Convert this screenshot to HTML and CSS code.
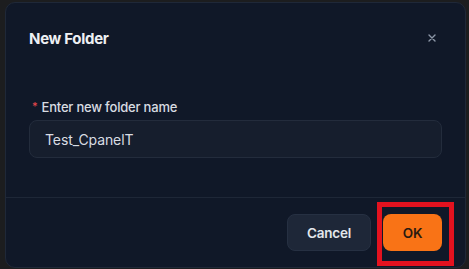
FILE: index.html
```html
<!DOCTYPE html>
<html>
<head>
<meta charset="utf-8">
<link rel="stylesheet" href="styles.css">
</head>
<body>
<div class="dialog">
  <div class="header">
    <div class="title">New Folder</div>
    <svg class="close" width="10" height="10" viewBox="0 0 10 10"><path d="M2 2L8 8M8 2L2 8" stroke="#8d97a8" stroke-width="1.4" stroke-linecap="round"/></svg>
  </div>
  <div class="body">
    <div class="label"><span class="req">*</span>Enter new folder name</div>
    <div class="input">Test_CpanelT</div>
  </div>
  <div class="footer">
    <button class="btn cancel">Cancel</button>
    <button class="btn ok">OK</button>
    <div class="highlight"></div>
  </div>
</div>
</body>
</html>
```
FILE: styles.css
```css
html, body { margin: 0; padding: 0; }
body {
  background: #1c1d1f;
  width: 469px;
  height: 269px;
  overflow: hidden;
  font-family: Inter, "Noto Sans", sans-serif;
}
.dialog {
  position: relative;
  margin: 2px 0 0 5px;
  width: 459px;
  height: 264px;
  background: #101828;
  border: 1px solid #1f2838;
  border-radius: 10px;
  box-sizing: content-box;
}
.header {
  display: flex;
  align-items: center;
  justify-content: space-between;
  padding: 26px 28px 0 23px;
  height: 20px;
}
.title {
  color: #eef0f3;
  font-size: 15px;
  font-weight: 700;
  letter-spacing: -0.3px;
  line-height: 20px;
}
.close { display: block; margin-top: -2px; }
.body {
  padding: 49px 23px 0 23px;
  height: 99px;
}
.label {
  color: #d8dce2;
  font-size: 13px;
  font-weight: 500;
  letter-spacing: -0.2px;
  line-height: 18px;
  display: flex;
  align-items: center;
}
.req {
  color: #e5484d;
  font-size: 11px;
  margin: 0 4px 0 3px;
  position: relative;
  top: -1px;
}
.input {
  margin-top: 4px;
  height: 38px;
  box-sizing: border-box;
  border: 1px solid #232c3c;
  border-radius: 8px;
  background: #161e2d;
  color: #d9dde3;
  font-size: 14px;
  letter-spacing: -0.1px;
  display: flex;
  align-items: center;
  padding-left: 15px;
}
.footer {
  position: relative;
  border-top: 1px solid #1e2737;
  display: flex;
  justify-content: flex-end;
  gap: 12px;
  padding: 16px 23px 0 0;
  margin-top: 0;
}
.btn {
  height: 37px;
  border: none;
  border-radius: 8px;
  font-family: Inter, "Noto Sans", sans-serif;
  font-size: 13.5px;
  font-weight: 600;
  letter-spacing: -0.2px;
  padding: 0;
}
.cancel {
  width: 84px;
  background: #1e2738;
  border: 1px solid #263042;
  color: #e4e7ec;
}
.ok {
  width: 59px;
  background: #f97316;
  color: #2a1a10;
  font-weight: 600;
}
.highlight {
  position: absolute;
  left: 371px;
  top: 4px;
  width: 77px;
  height: 64px;
  box-sizing: border-box;
  border: 5px solid #e3121f;
}
```
